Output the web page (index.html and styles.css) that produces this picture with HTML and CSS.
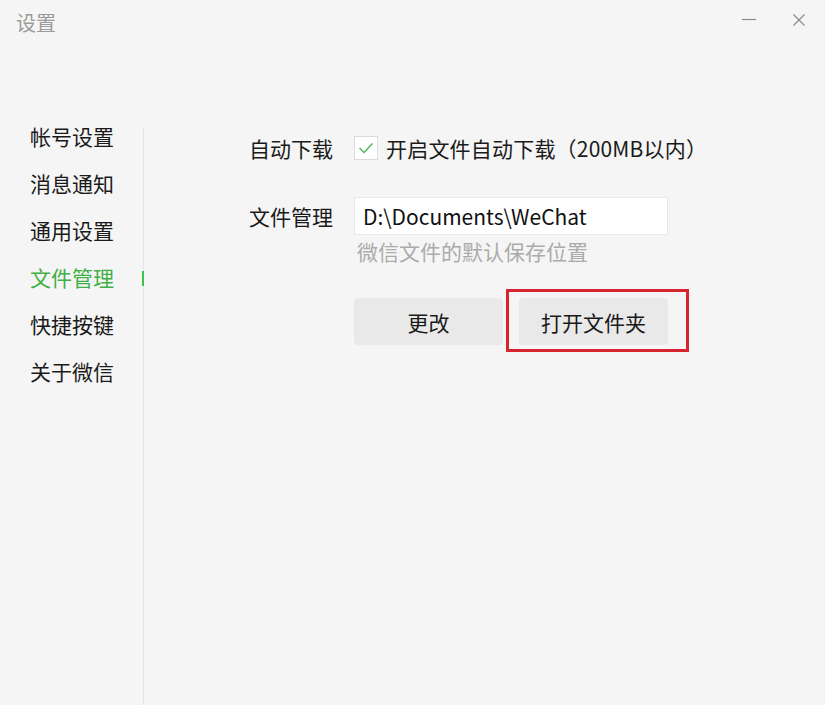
FILE: index.html
```html
<!DOCTYPE html>
<html lang="zh-CN">
<head>
<meta charset="utf-8">
<title>设置</title>
<link rel="stylesheet" href="styles.css">
</head>
<body>
<div class="window">
  <div class="titlebar">
    <div class="title">设置</div>
    <div class="controls">
      <svg class="ctl" width="16" height="16" viewBox="0 0 16 16"><path d="M1 7.5H15" stroke="#8a8a8a" stroke-width="1.2"/></svg>
      <svg class="ctl" width="14" height="16" viewBox="0 0 14 16"><path d="M1.5 2.5L12.5 13.5M12.5 2.5L1.5 13.5" stroke="#8a8a8a" stroke-width="1.2"/></svg>
    </div>
  </div>
  <div class="main">
    <ul class="nav">
      <li class="nav-item">帐号设置</li>
      <li class="nav-item">消息通知</li>
      <li class="nav-item">通用设置</li>
      <li class="nav-item active">文件管理</li>
      <li class="nav-item">快捷按键</li>
      <li class="nav-item">关于微信</li>
    </ul>
    <div class="divider"></div>
    <div class="content">
      <div class="row row-download">
        <div class="label">自动下载</div>
        <label class="check">
          <span class="box"><svg width="16" height="12" viewBox="0 0 16 12"><path d="M1.5 6L6 10.5L14.5 1.5" fill="none" stroke="#4bb65a" stroke-width="1.4"/></svg></span>
          <span class="check-text">开启文件自动下载（200MB以内）</span>
        </label>
      </div>
      <div class="row row-path">
        <div class="label">文件管理</div>
        <div class="path">D:\Documents\WeChat</div>
      </div>
      <div class="hint">微信文件的默认保存位置</div>
      <div class="buttons">
        <button class="btn">更改</button>
        <div class="marked">
          <button class="btn">打开文件夹</button>
          <span class="highlight"></span>
        </div>
      </div>
    </div>
  </div>
</div>
</body>
</html>
```
FILE: styles.css
```css
* { box-sizing: border-box; }
html, body {
  margin: 0;
  padding: 0;
  background: #f5f5f5;
}
body {
  font-family: "Noto Sans CJK SC", "Microsoft YaHei", sans-serif;
  color: #1a1a1a;
  width: 825px;
  height: 705px;
  overflow: hidden;
}
.window {
  display: flex;
  flex-direction: column;
  height: 705px;
}
.titlebar {
  height: 48px;
  display: flex;
  justify-content: space-between;
  align-items: flex-start;
  padding: 9px 19px 0 16px;
}
.title {
  font-size: 20px;
  line-height: 28px;
  color: #9a9a9a;
}
.controls {
  display: flex;
  gap: 35px;
  padding-top: 3px;
}
.main {
  flex: 1;
  display: flex;
  padding-top: 65px;
}
.nav {
  list-style: none;
  margin: 0;
  padding: 0;
  width: 143px;
}
.nav-item {
  position: relative;
  height: 47px;
  line-height: 47px;
  font-size: 21px;
  padding-left: 30px;
  color: #1a1a1a;
}
.nav-item.active { color: #3fb044; }
.nav-item.active::after {
  content: "";
  position: absolute;
  right: -1px;
  top: 17px;
  width: 2px;
  height: 15px;
  background: #3fc34f;
}
.divider {
  width: 1px;
  margin-top: 15px;
  background: #e4e4e4;
}
.content {
  padding: 23px 0 0 105px;
  display: flex;
  flex-direction: column;
}
.row {
  display: flex;
  align-items: center;
}
.label {
  width: 105px;
  font-size: 21px;
  line-height: 24px;
}
.check {
  display: flex;
  align-items: center;
  gap: 8px;
}
.box {
  width: 24px;
  height: 24px;
  background: #fff;
  border: 1px solid #dcdcdc;
  display: flex;
  align-items: center;
  justify-content: center;
}
.check-text {
  font-size: 21px;
  line-height: 24px;
  letter-spacing: 0.2px;
}
.row-path { margin-top: 37px; }
.path {
  width: 314px;
  height: 38px;
  background: #fff;
  border: 1px solid #e8e8e8;
  font-size: 21px;
  line-height: 36px;
  padding-left: 8px;
  color: #111;
}
.hint {
  margin: 3px 0 0 108px;
  font-size: 21px;
  line-height: 26px;
  color: #ababab;
}
.buttons {
  display: flex;
  gap: 16px;
  margin: 34px 0 0 105px;
}
.btn {
  width: 149px;
  height: 47px;
  border: none;
  border-radius: 4px;
  background: #e9e9e9;
  font-family: inherit;
  font-size: 21px;
  color: #1a1a1a;
  padding: 0;
}
.marked { position: relative; }
.highlight {
  position: absolute;
  left: -13px;
  top: -9px;
  width: 183px;
  height: 63px;
  border: 3px solid #d8242f;
}
```
